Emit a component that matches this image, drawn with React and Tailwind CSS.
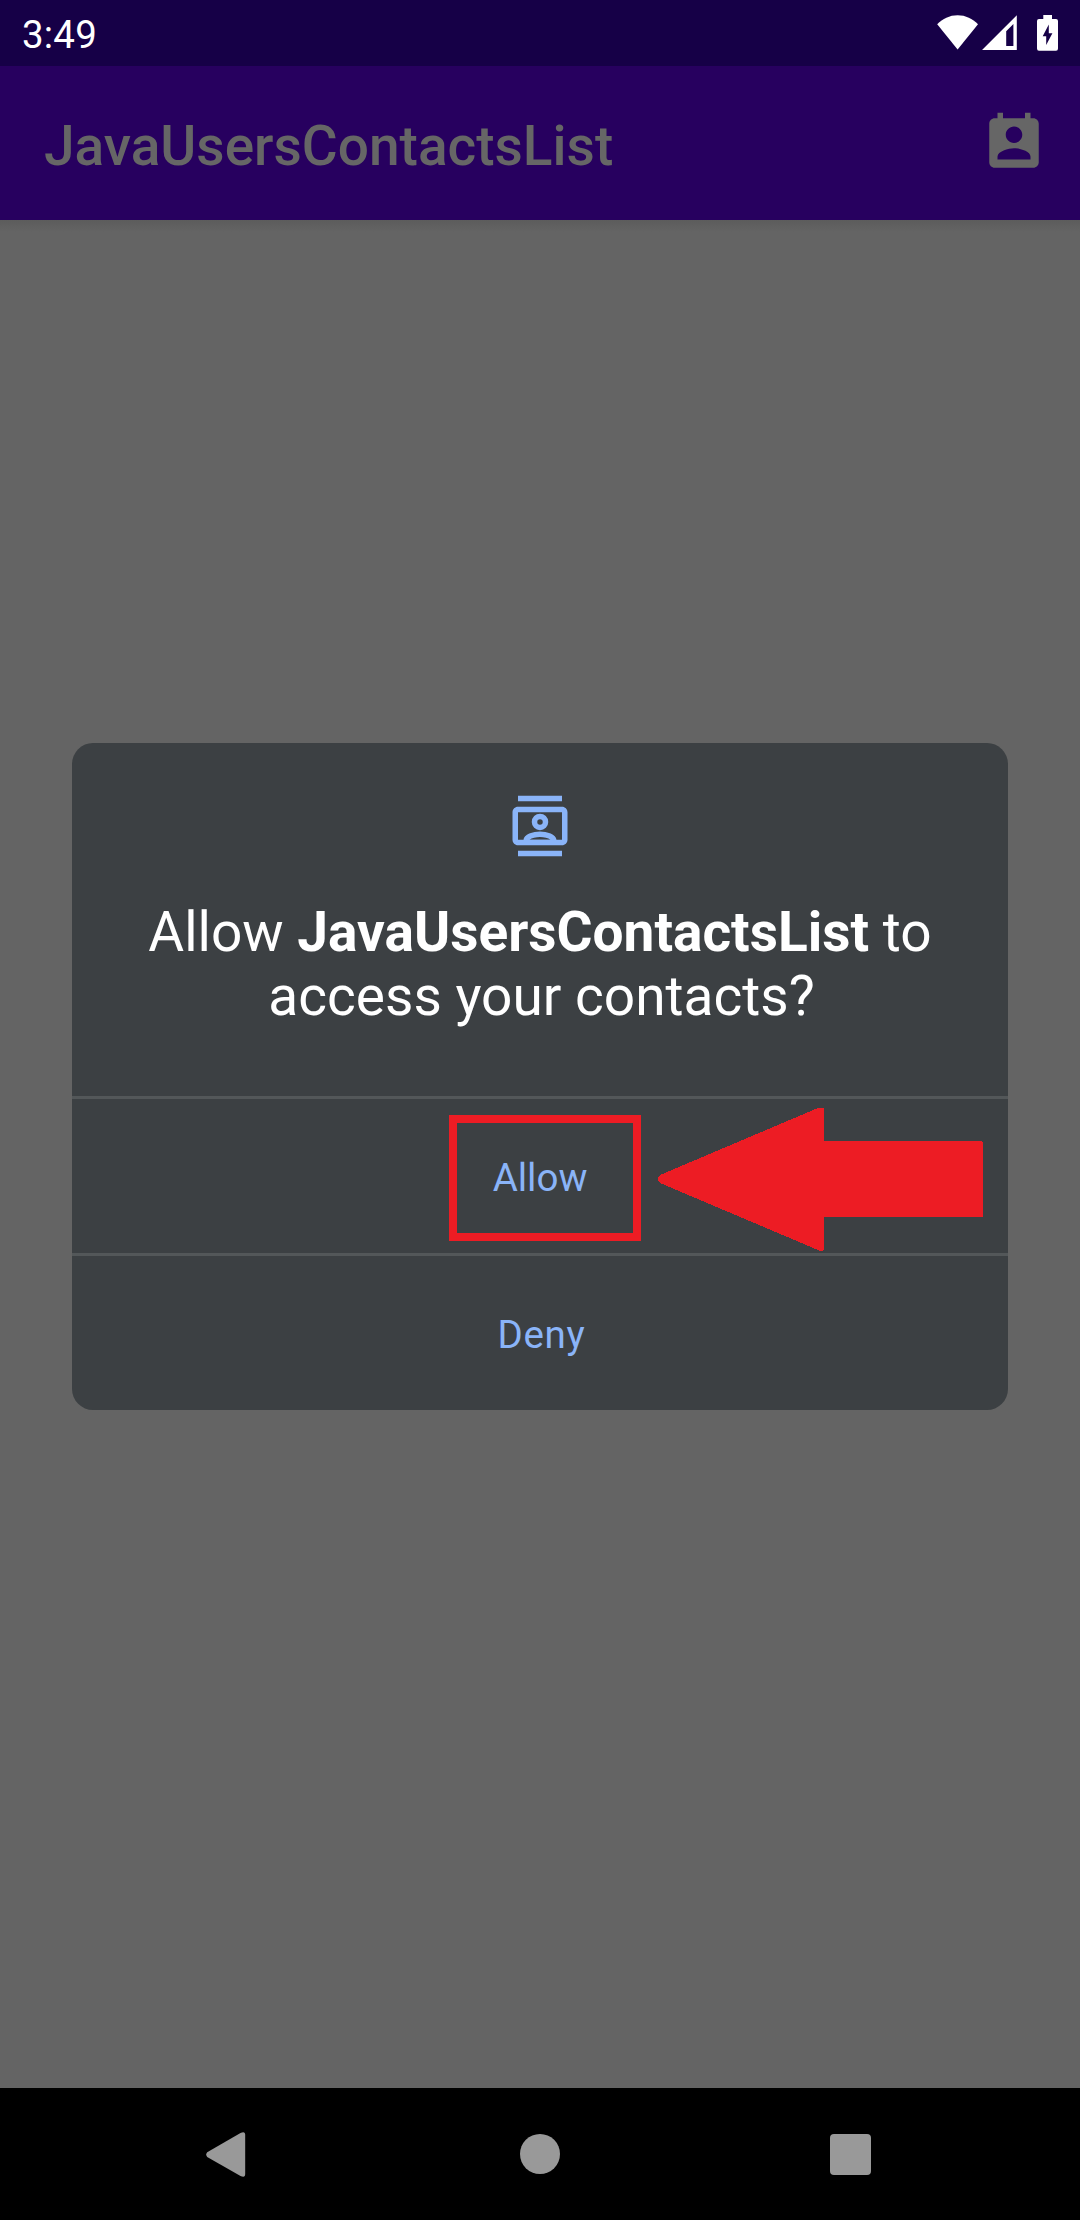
import React from "react";

function StatusBar() {
  return (
    <div className="flex h-[66px] items-center justify-between bg-[#160047] pl-[22px] pr-[22px] text-white">
      <span className="pt-[3px] text-[38.5px] leading-[60px] tracking-[0.2px]">3:49</span>
      <div className="flex h-[66px] pt-[15px]">
        <svg className="mr-[3px] h-9 w-[42px]" viewBox="0 0 42 36" fill="currentColor">
          <path d="M0.2 9.3C5.7 3.6 12.5 0.2 20.6 0.2S35.5 3.6 41 9.3L20.6 34.4Z" />
        </svg>
        <svg className="mr-5 h-9 w-[35px]" viewBox="0 0 35 36" fill="currentColor" fillRule="evenodd">
          <path d="M0 35L34.8 0.3V35ZM24.2 16.2V31H31.4V9Z" />
        </svg>
        <svg className="h-9 w-[21px]" viewBox="0 0 21 36" fill="currentColor" fillRule="evenodd">
          <path d="M6.3 0H15V4H19Q21 4 21 6V33.5Q21 35.7 19 35.7H2Q0 35.7 0 33.5V6Q0 4 2 4H6.3ZM11.8 9.5L5.7 21.3H9.2V30L15.4 18.2H11.8Z" />
        </svg>
      </div>
    </div>
  );
}

function ContactCalendarIcon() {
  return (
    <svg className="size-[66px]" viewBox="0 0 24 24" fill="currentColor">
      <path d="M19 3h-1V1h-2v2H8V1H6v2H5c-1.11 0-2 .9-2 2v14c0 1.1.89 2 2 2h14c1.1 0 2-.9 2-2V5c0-1.1-.9-2-2-2zm-7 3c1.66 0 3 1.34 3 3s-1.34 3-3 3-3-1.34-3-3 1.34-3 3-3zm6 12H6v-1c0-2 4-3.1 6-3.1s6 1.1 6 3.1v1z" />
    </svg>
  );
}

function ContactsIcon() {
  return (
    <svg className="size-[66px]" viewBox="0 0 24 24" fill="currentColor" fillRule="evenodd">
      <path d="M4 1h16v2H4zM4 21h16v2H4z" />
      <path d="M4 5h16c1.1 0 2 .9 2 2v10c0 1.1-.9 2-2 2H4c-1.1 0-2-.9-2-2V7c0-1.1.9-2 2-2zM4 7v10h16V7z" />
      <path d="M12 7.5a3 3 0 1 1 0 6 3 3 0 0 1 0-6zm0 2a1 1 0 1 0 0 2 1 1 0 0 0 0-2z" />
      <path d="M6 17.1C6 15 9.6 14 12 14s6 1 6 3.1zM8.2 17h7.6c-.8-.6-2.4-1-3.8-1s-3 .4-3.8 1z" />
    </svg>
  );
}

function AppBar() {
  return (
    <header className="flex h-[154px] items-center justify-between bg-[#27005f] pl-11 pr-[33px] text-[#666666]">
      <h1 className="pt-[5px] text-[55px] font-medium leading-[64px]">JavaUsersContactsList</h1>
      <ContactCalendarIcon />
    </header>
  );
}

function PermissionDialog() {
  return (
    <div className="flex h-[667px] w-[936px] flex-col rounded-[21px] bg-[#3c4043]">
      <div className="flex h-[353px] flex-col items-center pt-[50px]">
        <div className="text-[#8ab4f8]">
          <ContactsIcon />
        </div>
        <p className="mt-[41px] text-center text-[55px] leading-[64px] text-white">
          Allow <b className="font-bold">JavaUsersContactsList</b> to
          <br />
          <span className="pl-[3px]">access your contacts?</span>
        </p>
      </div>
      <button className="relative flex h-[157px] items-center justify-center border-t-[3px] border-[#535759] pt-1 text-[38.5px] text-[#8ab4f8]">
        <span>Allow</span>
        <span className="absolute left-[377px] top-4 h-[126px] w-[192px] border-8 border-[#ed1c24]" />
        <svg className="absolute left-[586px] top-2 h-[145px] w-[326px]" viewBox="0 0 326 145" fill="#ed1c24">
          <path d="M0 70L2 68L160 1L162 0.5H165L166 1.5V34H323L325 35.5V109L324 110H166V142.5L165 144H162L160 143L2 76L0 74Z" shapeRendering="crispEdges" />
        </svg>
      </button>
      <button className="flex h-[157px] items-center justify-center border-t-[3px] border-[#535759] pl-[3px] pt-1 text-[38.5px] tracking-[0.7px] text-[#8ab4f8]">
        Deny
      </button>
    </div>
  );
}

function NavigationBar() {
  return (
    <nav className="flex h-[132px] items-center justify-between bg-black pl-[206px] pr-[209px] text-[#999999]">
      <svg className="h-[45px] w-11" viewBox="0 0 44 45" fill="currentColor">
        <path d="M1.2 20.2L34.5 1Q39.2-1.2 39.2 3V42Q39.2 46.2 34.5 44L1.2 25Q-.8 22.6 1.2 20.2Z" />
      </svg>
      <div className="size-10 rounded-full bg-[#999999]" />
      <div className="h-[41px] w-[41px] rounded bg-[#999999]" />
    </nav>
  );
}

export default function App() {
  return (
    <div className="flex h-[2220px] w-[1080px] flex-col overflow-hidden bg-[#646464] font-['Roboto',sans-serif]">
      <StatusBar />
      <AppBar />
      <div className="h-3 bg-linear-to-b from-[#5c5c5c] to-[#646464]" />
      <main className="flex flex-1 justify-center pt-[511px]">
        <PermissionDialog />
      </main>
      <NavigationBar />
    </div>
  );
}
